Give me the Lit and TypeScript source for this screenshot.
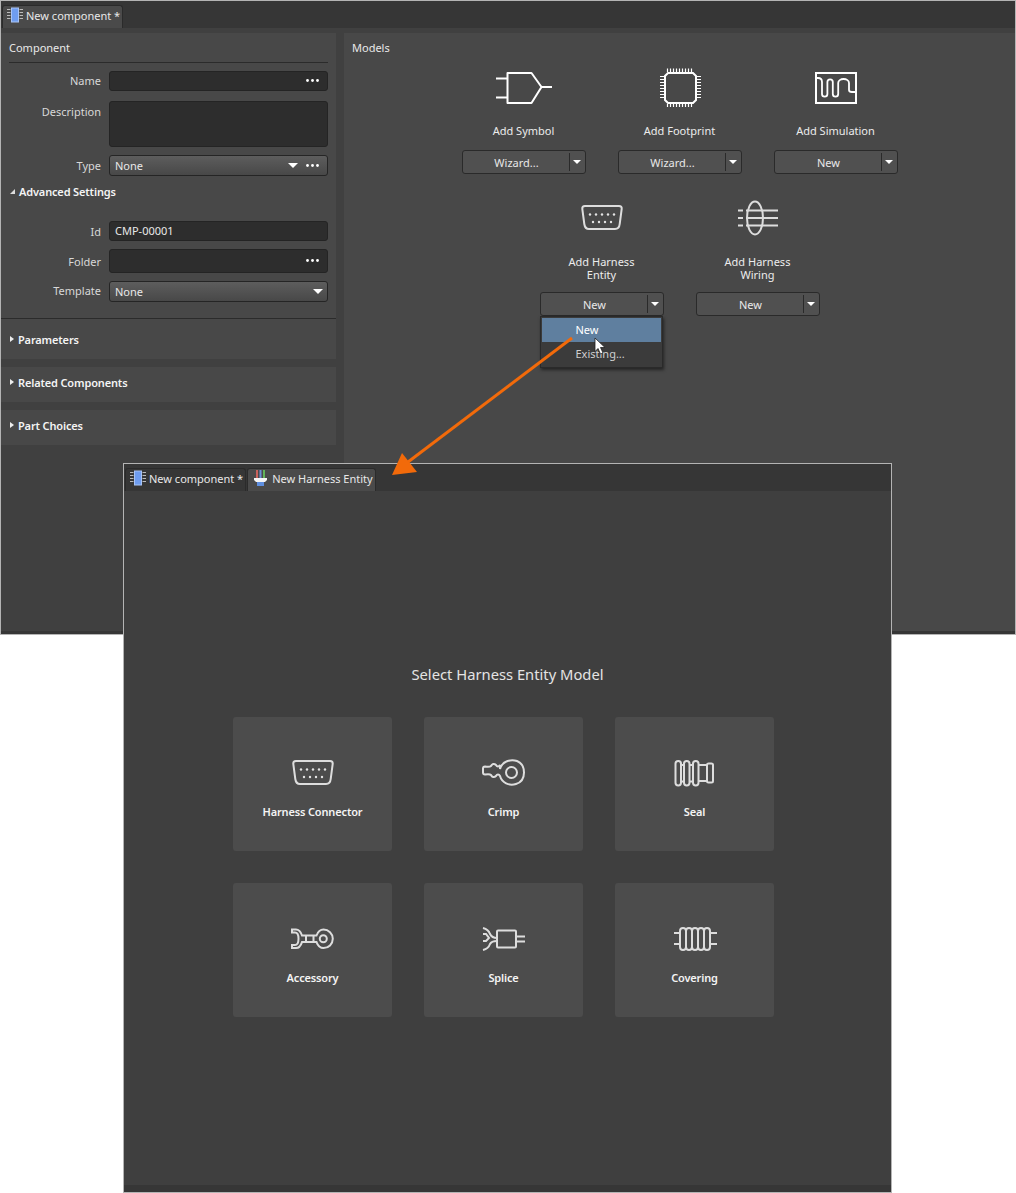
import { LitElement, html, css, svg } from 'lit'
import { customElement } from 'lit/decorators.js'

// icons use a local viewBox taken from the reference, offset so 1 unit = 1px
const symbolIcon = svg`<svg width="60" height="40" viewBox="494 67 60 40" fill="none" stroke="#fff" stroke-width="2"><path d="M507.500 73h24l10 14-10 16h-24zM496 78.500h11.500M496 97.500h11.500M541.500 87H552" stroke-linejoin="round"/></svg>`

const footprintIcon = svg`<svg width="44" height="40" viewBox="658 67 44 40" fill="none" stroke="#fff"><path d="M668 73h25l3 3v24l-3 3h-25l-3-3V76z" stroke-width="2"/><path d="M667.500 68.500v3.500M670.500 68.500v3.500M673.500 68.500v3.500M676.500 68.500v3.500M679.500 68.500v3.500M682.500 68.500v3.500M685.500 68.500v3.500M688.500 68.500v3.500M691.500 68.500v3.500M667.500 104v3M670.500 104v3M673.500 104v3M676.500 104v3M679.500 104v3M682.500 104v3M685.500 104v3M688.500 104v3M691.500 104v3M660 76.500h4M660 79.500h4M660 82.500h4M660 85.500h4M660 88.500h4M660 91.500h4M660 94.500h4M660 97.500h4M697 76.500h4M697 79.500h4M697 82.500h4M697 85.500h4M697 88.500h4M697 91.500h4M697 94.500h4M697 97.500h4" stroke-width="1.200"/></svg>`

const simulationIcon = svg`<svg width="44" height="40" viewBox="814 67 44 40" fill="none" stroke="#fff" stroke-width="2"><rect x="816" y="73" width="40" height="30"/><path d="M816 78h2c3 0 4 2 4 4v12a2.700 2.700 0 0 0 5.400 0V82a2.700 2.700 0 0 1 5.400 0v12a2.700 2.700 0 0 0 5.400 0V83a5.400 4 0 0 1 10.800 0v7q0 2 3 2h3.500" stroke-width="1.800"/></svg>`

const connectorIcon = svg`<svg width="44" height="30" viewBox="0 0 44 30" fill="none" stroke="#ddd"><path d="M5 3h34q3 0 2.700 3l-2 15q-.5 5-4.700 5H9q-4 0-4.700-5l-2-15Q2 3 5 3z" stroke-width="2"/><g fill="#e4e4e4" stroke="none"><circle cx="10" cy="11.500" r="1.200"/><circle cx="16" cy="11.500" r="1.200"/><circle cx="22" cy="11.500" r="1.200"/><circle cx="28" cy="11.500" r="1.200"/><circle cx="34" cy="11.500" r="1.200"/><circle cx="13" cy="19" r="1.200"/><circle cx="19" cy="19" r="1.200"/><circle cx="25" cy="19" r="1.200"/><circle cx="31" cy="19" r="1.200"/></g></svg>`

const wiringIcon = svg`<svg width="44" height="38" viewBox="736 199 44 38" fill="none" stroke="#ddd" stroke-width="2"><ellipse cx="755" cy="218" rx="8" ry="16.500"/><path d="M738 210.500h5M746 210.500h32M738 218h5M746 218h32M738 225.500h5M746 225.500h32"/></svg>`

const crimpIcon = svg`<svg width="46" height="30" viewBox="481 758 46 30" fill="none" stroke="#ddd" stroke-width="2"><circle cx="511.500" cy="772.500" r="5.500"/><path d="M500 769c2-8 11-10 17-8 5 2 7 6 7 11.500s-3 10-8 11.500c-7 2-14-1-16-8-1-2-3-2-4 0-2 2-4 1-5-1-1-1-3-1-6-.5-1 0-2-1-2-2v-4c0-1 1-2 2-2 3 .5 5 .5 6-.5 1-2 3-3 5-1 1 2 3 2 4 0z"/></svg>`

const sealIcon = svg`<svg width="44" height="30" viewBox="673 758 44 30" fill="none" stroke="#ddd" stroke-width="2"><rect x="675.500" y="761" width="5.500" height="24.500" rx="2.700"/><rect x="684" y="761" width="5.500" height="24.500" rx="2.700"/><rect x="693" y="761" width="5.500" height="24.500" rx="2.700"/><path d="M681 765h3M681 781.500h3M689.500 765h3.500M689.500 781.500h3.500M698.500 765h9M698.500 781h9"/><rect x="707" y="763.500" width="6" height="19" rx="1.500"/></svg>`

const accessoryIcon = svg`<svg width="46" height="26" viewBox="290 926 46 26" fill="none" stroke="#ddd" stroke-width="2"><circle cx="323.300" cy="938.700" r="3.500"/><path d="M292 929.500h4c3 0 5 3 6 6h14.500c1.500-4 4-6 7-6 5 0 9.300 4 9.300 9.300s-4.300 9.300-9.300 9.300c-3 0-5.500-2-7-6H302c-1 3-3 6-6 6h-4v-3h3c2.500 0 3.500-3 3.500-6.300s-1-6.300-3.500-6.300h-3zM306 935.500v6.500M313.500 935.500v6.500"/></svg>`

const spliceIcon = svg`<svg width="46" height="26" viewBox="481 926 46 26" fill="none" stroke="#ddd" stroke-width="2"><rect x="497" y="930.500" width="19" height="17" rx="1"/><path d="M516 936.500h9M516 941.500h9M483 928c4 1 6 3 7 6 1 2 4 4 7 4M483 950c4-1 6-3 7-6 1-2 4-3 7-3M483 934l3 0 3 4-3 3-3 0"/></svg>`

const coveringIcon = svg`<svg width="46" height="28" viewBox="671 925 46 28" fill="none" stroke="#ddd" stroke-width="2"><path d="M673 933h6M673 944h6M708.500 933h7.500M708.500 944h7.500"/><rect x="679" y="928" width="6" height="22" rx="3"/><rect x="685" y="928" width="6" height="22" rx="3"/><rect x="691" y="928" width="6" height="22" rx="3"/><rect x="697" y="928" width="6" height="22" rx="3"/><rect x="703" y="928" width="6" height="22" rx="3"/></svg>`

const chipTabIcon = svg`<svg width="16" height="16" viewBox="0 0 16 16"><rect x="4.500" y="1" width="7" height="14" fill="#6f9df0" stroke="#a9c4f5"/><path d="M0 2.500h3.500M0 5.500h3.500M0 8.500h3.500M0 11.500h3.500M12.500 2.500h3.500M12.500 5.500h3.500M12.500 8.500h3.500M12.500 11.500h3.500" stroke="#bbb"/></svg>`

const harnessTabIcon = svg`<svg width="17" height="16" viewBox="-2 0 17 16"><path d="M3 0v8" stroke="#d8655f" stroke-width="2" opacity=".9"/><path d="M6.500 0v8" stroke="#6c8fd6" stroke-width="2"/><path d="M10 0v8" stroke="#62b45a" stroke-width="2"/><path d="M0 8h13v2l-2 2H2L0 10z" fill="#f4f4f4"/><rect x="3" y="12" width="7" height="4" fill="#5f8fe0"/></svg>`

const dots = svg`<svg class="dots" width="13" height="3" viewBox="0 0 13 3" fill="#fff"><circle cx="1.500" cy="1.500" r="1.400"/><circle cx="6.500" cy="1.500" r="1.400"/><circle cx="11.500" cy="1.500" r="1.400"/></svg>`
const caret = svg`<svg width="10" height="5" viewBox="0 0 10 5" fill="#fff"><path d="M0 0h10L5 5z"/></svg>`

const models = [
	[
		{ icon: symbolIcon, label: ['Add Symbol'], action: 'Wizard...' },
		{ icon: footprintIcon, label: ['Add Footprint'], action: 'Wizard...' },
		{ icon: simulationIcon, label: ['Add Simulation'], action: 'New' },
	],
	[
		{ icon: connectorIcon, label: ['Add Harness', 'Entity'], action: 'New', open: true },
		{ icon: wiringIcon, label: ['Add Harness', 'Wiring'], action: 'New' },
	],
]

const entities = [
	{ icon: connectorIcon, label: 'Harness Connector' },
	{ icon: crimpIcon, label: 'Crimp' },
	{ icon: sealIcon, label: 'Seal' },
	{ icon: accessoryIcon, label: 'Accessory' },
	{ icon: spliceIcon, label: 'Splice' },
	{ icon: coveringIcon, label: 'Covering' },
]

@customElement('app-root')
export class AppRoot extends LitElement {
	static styles = css`
		:host {
			display: block;
			position: relative;
			width: 1016px;
			height: 1193px;
			background: #fff;
			overflow: hidden;
			font-family: 'Noto Sans', 'Open Sans', sans-serif;
			font-size: 11px;
			line-height: 13px;
			color: #e8e8e8;
		}

		.window {
			position: absolute;
			box-sizing: border-box;
			display: flex;
			flex-direction: column;
			border: 1px solid #b4b4b4;
		}
		.main {
			left: 0;
			top: 0;
			width: 1016px;
			height: 635px;
			background: #404040;
		}
		.entity {
			left: 123px;
			top: 463px;
			width: 769px;
			height: 730px;
			background: #3f3f3f;
		}

		.tabbar {
			flex: none;
			height: 27px;
			display: flex;
			align-items: flex-end;
			gap: 1px;
			background: #363636;
			padding-left: 1px;
			box-sizing: border-box;
		}
		.tab {
			box-sizing: border-box;
			height: 23px;
			display: flex;
			align-items: center;
			gap: 3px;
			padding: 0 2px 4px 4px;
			border: 1px solid #2b2b2b;
			border-bottom: none;
			border-radius: 3px 3px 0 0;
			background: #363636;
			white-space: nowrap;
		}
		.tab.active {
			background: #4a4a4a;
		}

		.panes {
			flex: 1;
			display: flex;
			gap: 8px;
			padding-top: 5px;
			min-height: 0;
		}
		.side {
			flex: none;
			width: 335px;
			display: flex;
			flex-direction: column;
			gap: 8px;
		}
		.block {
			background: #484848;
		}
		.props {
			box-sizing: border-box;
			height: 286px;
			padding: 0 8px;
			border-bottom: 1px solid #2b2b2b;
		}
		.props-title {
			height: 30px;
			display: flex;
			align-items: center;
			box-sizing: border-box;
			border-bottom: 1px solid #2b2b2b;
			margin-bottom: 8px;
		}
		.fields {
			display: grid;
			grid-template-columns: 92px 219px;
			align-items: start;
			column-gap: 8px;
		}
		.lbl {
			text-align: right;
			color: #d8d8d8;
			line-height: 20px;
		}
		.lbl.low {
			line-height: 22px;
		}
		.lbl.nudge {
			padding-top: 1px;
			margin-bottom: 7px;
		}
		.input {
			box-sizing: border-box;
			height: 20px;
			display: flex;
			align-items: center;
			justify-content: flex-end;
			gap: 8px;
			padding: 0 8px 1px 5px;
			background: #2d2d2d;
			border: 1px solid #242424;
			border-radius: 3px;
		}
		.combo {
			height: 21px;
			background: linear-gradient(#5d5d5d, #484848);
			border-color: #252525;
		}
		.combo.single {
			padding-right: 4px;
		}
		.grow {
			flex: 1;
		}
		.mb10 {
			margin-bottom: 10px;
		}
		.mb8 {
			margin-bottom: 8px;
		}
		.tall {
			height: 46px;
		}
		.folder {
			height: 24px;
		}
		.lbl.folder-lbl {
			line-height: 22px;
			padding-top: 2px;
		}
		.bold {
			font-weight: 600;
			letter-spacing: -0.15px;
			color: #f4f4f4;
		}
		.advanced {
			display: flex;
			align-items: center;
			gap: 4px;
			height: 14px;
			margin: 7px 0 23px 1px;
		}
		.section {
			display: flex;
			align-items: flex-start;
			gap: 4px;
			height: 35px;
			padding: 9px 0 0 9px;
			box-sizing: border-box;
		}
		.section.first {
			height: 40px;
			padding-top: 14px;
			margin-top: -8px;
		}
		.tri {
			width: 0;
			height: 0;
			margin-top: 3px;
			border-left: 4px solid #eee;
			border-top: 3.5px solid transparent;
			border-bottom: 3.5px solid transparent;
		}
		.tri-open {
			width: 0;
			height: 0;
			border-bottom: 5px solid #ddd;
			border-left: 5px solid transparent;
		}
		.content {
			flex: 1;
			min-width: 0;
			padding: 8px 8px 0;
			box-sizing: border-box;
			display: flex;
			flex-direction: column;
		}
		.models-title {
			height: 13px;
			margin-bottom: 13px;
		}
		.grid {
			display: flex;
			flex-direction: column;
			gap: 24px;
		}
		.row {
			display: flex;
			justify-content: center;
			gap: 32px;
		}
		.model {
			position: relative;
			width: 124px;
			display: flex;
			flex-direction: column;
			align-items: center;
		}
		.model-icon {
			height: 40px;
			display: flex;
			align-items: center;
			justify-content: center;
			margin-bottom: 17px;
		}
		.model-label {
			text-align: center;
			margin-bottom: 13px;
			color: #ececec;
		}
		.model-label.two {
			margin-bottom: 11px;
		}
		.split {
			box-sizing: border-box;
			width: 124px;
			height: 24px;
			display: flex;
			background: #505050;
			border: 1px solid #2a2a2a;
			border-radius: 3px;
		}
		.split-main {
			flex: 1;
			display: flex;
			align-items: center;
			justify-content: center;
			padding-left: 2px;
		}
		.split-caret {
			width: 15px;
			display: flex;
			align-items: center;
			justify-content: center;
			border-left: 1px solid #2a2a2a;
			margin: 2px 0;
		}
		.split-caret svg {
			width: 8px;
			height: 4px;
		}
		.menu {
			position: absolute;
			top: 100%;
			left: 0;
			box-sizing: border-box;
			width: 123px;
			height: 52px;
			padding: 1px;
			background: #3b3b3b;
			border: 1px solid #2a2a2a;
			box-shadow: 1px 2px 3px rgba(0, 0, 0, 0.5);
			display: flex;
			flex-direction: column;
			z-index: 2;
		}
		.menu-item {
			box-sizing: border-box;
			height: 24px;
			display: flex;
			align-items: center;
			padding: 0 0 2px 34px;
			flex: none;
			color: #cfcfcf;
		}
		.menu-item.hover {
			background: #5f7f9f;
			color: #fff;
		}
		.strip {
			flex: none;
			height: 3px;
			background: #363636;
		}
		.entity .strip {
			height: 7px;
		}

		.picker {
			flex: 1;
			display: flex;
			flex-direction: column;
			align-items: center;
			padding-top: 173px;
			box-sizing: border-box;
		}
		.picker-title {
			font-size: 14.75px;
			line-height: 20px;
			color: #e4e4e4;
			margin-bottom: 33px;
		}
		.cards {
			display: grid;
			grid-template-columns: repeat(3, 159px);
			grid-auto-rows: 134px;
			gap: 32px;
			transform: translateX(-4px);
		}
		.card {
			display: flex;
			flex-direction: column;
			align-items: center;
			background: #4c4c4c;
			border-radius: 3px;
		}
		.card-icon {
			height: 32px;
			margin-top: 40px;
			display: flex;
			align-items: center;
			justify-content: center;
		}
		.card-label {
			margin-top: 16px;
		}

		.overlay {
			position: absolute;
			left: 0;
			top: 0;
			z-index: 3;
			pointer-events: none;
		}
	`

	renderSplit(action: string, open = false) {
		return html`
			<div class="split">
				<div class="split-main">${action}</div>
				<div class="split-caret">${caret}</div>
			</div>
			${open
				? html`<div class="menu">
						<div class="menu-item hover">New</div>
						<div class="menu-item">Existing...</div>
					</div>`
				: null}
		`
	}

	render() {
		return html`
			<div class="window main">
				<div class="tabbar">
					<div class="tab active">${chipTabIcon}<span>New component *</span></div>
				</div>
				<div class="panes">
					<div class="side">
						<div class="block props">
							<div class="props-title">Component</div>
							<div class="fields">
								<div class="lbl mb10">Name</div>
								<div class="input mb10">${dots}</div>
								<div class="lbl low mb8">Description</div>
								<div class="input tall mb8"></div>
								<div class="lbl low">Type</div>
								<div class="input combo"><span class="grow">None</span>${caret}${dots}</div>
							</div>
							<div class="advanced bold"><span class="tri-open"></span>Advanced Settings</div>
							<div class="fields">
								<div class="lbl nudge">Id</div>
								<div class="input mb8"><span class="grow">CMP-00001</span></div>
								<div class="lbl folder-lbl mb8">Folder</div>
								<div class="input folder mb8">${dots}</div>
								<div class="lbl">Template</div>
								<div class="input combo single"><span class="grow">None</span>${caret}</div>
							</div>
						</div>
						<div class="block section first bold"><span class="tri"></span>Parameters</div>
						<div class="block section bold"><span class="tri"></span>Related Components</div>
						<div class="block section bold"><span class="tri"></span>Part Choices</div>
					</div>
					<div class="block content">
						<div class="models-title">Models</div>
						<div class="grid">
							${models.map(
								(row) => html`<div class="row">
									${row.map(
										(m: any) => html`<div class="model">
											<div class="model-icon">${m.icon}</div>
											<div class="model-label ${m.label.length > 1 ? 'two' : ''}">
												${m.label.map((l: string) => html`<div>${l}</div>`)}
											</div>
											${this.renderSplit(m.action, m.open)}
										</div>`,
									)}
								</div>`,
							)}
						</div>
					</div>
				</div>
				<div class="strip"></div>
			</div>

			<div class="window entity">
				<div class="tabbar">
					<div class="tab">${chipTabIcon}<span>New component *</span></div>
					<div class="tab active">${harnessTabIcon}<span>New Harness Entity</span></div>
				</div>
				<div class="picker">
					<div class="picker-title">Select Harness Entity Model</div>
					<div class="cards">
						${entities.map(
							(e) => html`<div class="card">
								<div class="card-icon">${e.icon}</div>
								<div class="card-label bold">${e.label}</div>
							</div>`,
						)}
					</div>
				</div>
				<div class="strip"></div>
			</div>

			<svg class="overlay" width="1016" height="1193" viewBox="0 0 1016 1193">
				<path d="M572 338 408 462" stroke="#f26a0a" stroke-width="3" fill="none" />
				<path d="M392 475 402 453 417 472z" fill="#f26a0a" />
				<path d="M595 338v13.500l3-3 2.500 5.500 2.500-1-2.500-5.500h4.500z" fill="#fff" stroke="#222" stroke-width="0.8" />
			</svg>
		`
	}
}
